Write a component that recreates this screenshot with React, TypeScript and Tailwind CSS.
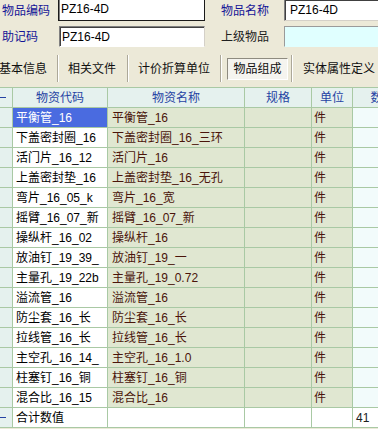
import React from "react";

const rows: [string, string][] = [
  ["平衡管_16", "平衡管_16"],
  ["下盖密封圈_16", "下盖密封圈_16_三环"],
  ["活门片_16_12", "活门片_16"],
  ["上盖密封垫_16", "上盖密封垫_16_无孔"],
  ["弯片_16_05_k", "弯片_16_宽"],
  ["摇臂_16_07_新", "摇臂_16_07_新"],
  ["操纵杆_16_02", "操纵杆_16"],
  ["放油钉_19_39_", "放油钉_19_一"],
  ["主量孔_19_22b", "主量孔_19_0.72"],
  ["溢流管_16", "溢流管_16"],
  ["防尘套_16_长", "防尘套_16_长"],
  ["拉线管_16_长", "拉线管_16_长"],
  ["主空孔_16_14_", "主空孔_16_1.0"],
  ["柱塞钉_16_铜", "柱塞钉_16_铜"],
  ["混合比_16_15", "混合比_16"],
];

const cell = "h-full shrink-0 border-r border-[#a9c9a4] flex items-center overflow-hidden whitespace-nowrap";

function Sep({ ml }: { ml: string }) {
  return <div className={`${ml} w-[2px] h-[27px] border-l border-[#aca899] border-r border-r-white shrink-0`} />;
}

export default function App() {
  return (
    <div className="w-[378px] h-[429px] overflow-hidden bg-[#ece9d8] text-[12px] leading-none text-black font-['Liberation_Sans','Noto_Sans_CJK_SC',sans-serif]">
      {/* Row 1 */}
      <div className="flex h-[21px] items-center">
        <div className="w-[58px] pl-[2px] text-[#141496] shrink-0">物品编码</div>
        <div className="w-[147px] h-[23px] mt-[-3px] shrink-0 bg-white border border-[#1a1a1a] shadow-[inset_1px_1px_0_#808080] flex items-center pl-[2px]">
          PZ16-4D
        </div>
        <div className="w-[63px] ml-[16px] text-[#141496] shrink-0">物品名称</div>
        <div className="w-[110px] h-[22px] mt-[-2px] shrink-0 bg-white border border-[#808080] border-b-[#d4d0c8] border-r-[#d4d0c8] shadow-[inset_1px_1px_0_#404040] flex items-center pl-[5px]">
          PZ16-4D
        </div>
      </div>
      {/* Row 2 */}
      <div className="flex h-[21px] mt-[5px] items-center">
        <div className="w-[59px] pl-[2px] text-[#141496] shrink-0">助记码</div>
        <div className="w-[146px] h-[21px] shrink-0 bg-white border border-[#808080] border-b-[#ffffff] border-r-[#d4d0c8] shadow-[inset_1px_1px_0_#404040] flex items-center pl-[2px]">
          PZ16-4D
        </div>
        <div className="w-[63px] ml-[16px] text-[#202020] shrink-0">上级物品</div>
        <div className="w-[110px] h-[21px] shrink-0 bg-[#e0ffff] border border-[#9a9a9a] border-b-[#e0ffff] border-r-[#e0ffff]" />
      </div>
      {/* Tabs */}
      <div className="flex h-[27px] mt-[8px] items-center text-[#101010]">
        <span className="ml-[-1px] shrink-0">基本信息</span>
        <Sep ml="ml-[10px]" />
        <span className="ml-[9px] shrink-0">相关文件</span>
        <Sep ml="ml-[11px]" />
        <span className="ml-[9px] shrink-0">计价折算单位</span>
        <Sep ml="ml-[10px]" />
        <div className="ml-[5px] w-[61px] h-[22px] shrink-0 flex items-center justify-center bg-[#f5f4ef] border border-[#8e8b80] border-b-white border-r-white">
          物品组成
        </div>
        <Sep ml="ml-[3px]" />
        <span className="ml-[10px] shrink-0">实体属性定义</span>
      </div>
      {/* Grid */}
      <div className="mt-[5px] border-t border-[#a9c9a4] w-[420px]">
        {/* header */}
        <div className="flex h-[20px] border-b border-[#a9c9a4] bg-[#e5f1ee] text-[#2543a3]">
          <div className={`${cell} w-[13px]`}>
            <div className="w-[6px] h-[1px] bg-[#2543a3]" />
          </div>
          <div className={`${cell} w-[95px] justify-center`}>物资代码</div>
          <div className={`${cell} w-[137px] justify-center`}>物资名称</div>
          <div className={`${cell} w-[67px] justify-center`}>规格</div>
          <div className={`${cell} w-[41px] justify-center`}>单位</div>
          <div className={`${cell} w-[60px] justify-center`}>数量</div>
        </div>
        {rows.map(([code, name], i) => (
          <div key={i} className="flex h-[20px] border-b border-[#a9c9a4]">
            <div className={`${cell} w-[13px] bg-[#e5f1ee]`} />
            <div
              className={`${cell} w-[95px] pl-[3px] ${i === 0 ? "bg-[#4a6be0] text-white" : "bg-white text-black"}`}
            >
              {code}
            </div>
            <div className={`${cell} w-[137px] pl-[4px] bg-[#e0e7d1] text-[#4a140a]`}>{name}</div>
            <div className={`${cell} w-[67px] bg-[#e0e7d1]`} />
            <div className={`${cell} w-[41px] pl-[2px] bg-[#e0e7d1] text-[#4a140a]`}>件</div>
            <div className={`${cell} w-[60px] bg-[#f2fbfb]`} />
          </div>
        ))}
        {/* total */}
        <div className="flex h-[20px] border-b border-[#a9c9a4] bg-white">
          <div className={`${cell} w-[13px] bg-[#e5f1ee]`}>
            <div className="w-[6px] h-[1px] bg-[#2543a3]" />
          </div>
          <div className={`${cell} w-[95px] pl-[3px]`}>合计数值</div>
          <div className={`${cell} w-[137px]`} />
          <div className={`${cell} w-[67px]`} />
          <div className={`${cell} w-[41px]`} />
          <div className={`${cell} w-[60px] pl-[3px] text-[#202020]`}>41</div>
        </div>
      </div>
    </div>
  );
}
